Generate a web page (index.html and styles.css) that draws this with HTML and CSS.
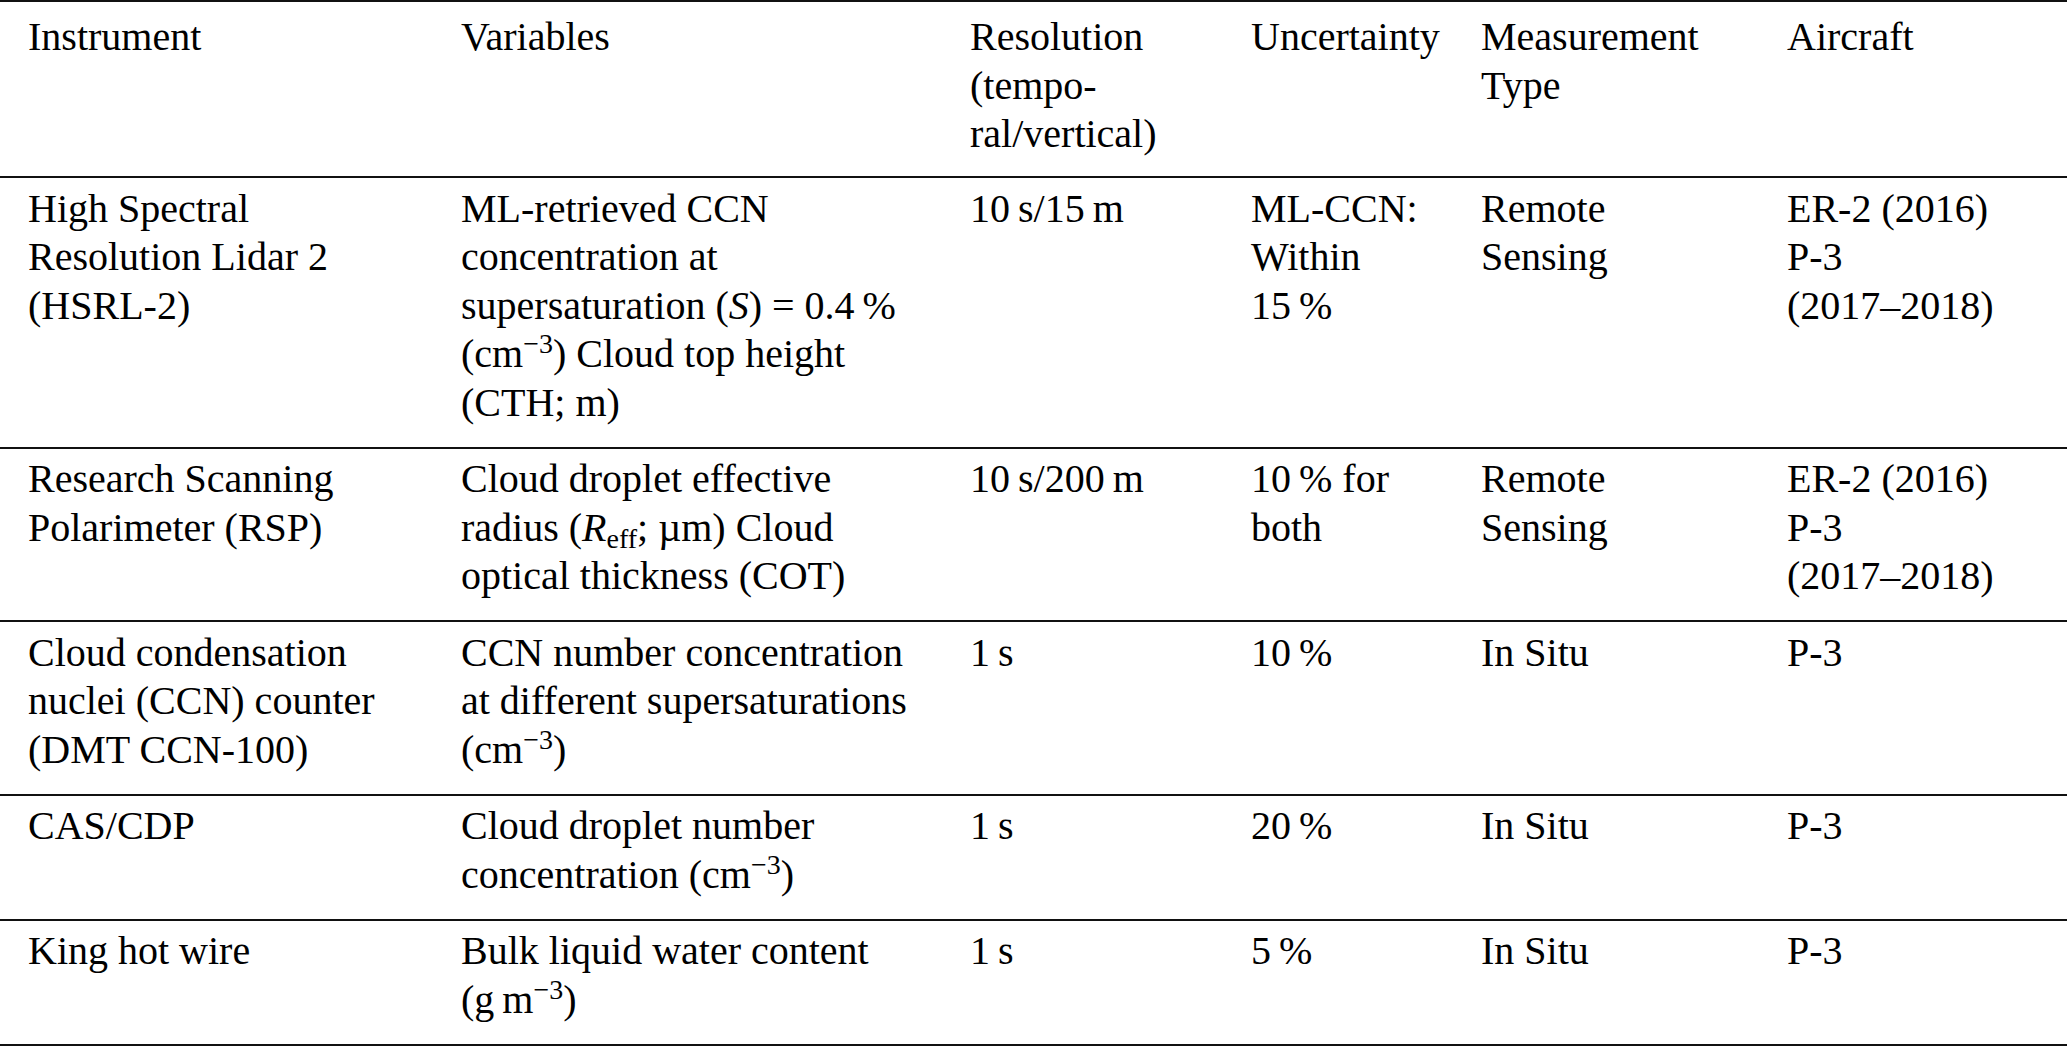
FILE: index.html
```html
<!DOCTYPE html>
<html lang="en">
<head>
<meta charset="utf-8">
<title>Instruments</title>
<link rel="stylesheet" href="styles.css">
</head>
<body>
<div class="table">
  <div class="h">Instrument</div>
  <div class="h">Variables</div>
  <div class="h">Resolution (tempo-<br>ral/vertical)</div>
  <div class="h">Uncertainty</div>
  <div class="h">Measurement Type</div>
  <div class="h">Aircraft</div>

  <div class="c">High Spectral Resolution Lidar 2 (HSRL-2)</div>
  <div class="c">ML-retrieved CCN concentration at supersaturation <span class="nb">(<i>S</i>)&nbsp;=&nbsp;0.4&#8201;%</span> <span class="nb">(cm<span class="sup">&#8722;3</span>)</span> Cloud top height (CTH; m)</div>
  <div class="c"><span class="nb">10&#8201;s/15&#8201;m</span></div>
  <div class="c">ML-CCN: Within <span class="nb">15&#8201;%</span></div>
  <div class="c">Remote Sensing</div>
  <div class="c"><span class="nb">ER-2 (2016)</span> <span class="nb">P-3</span> <span class="nb">(2017–2018)</span></div>

  <div class="c">Research Scanning Polarimeter (RSP)</div>
  <div class="c">Cloud droplet effective radius (<i>R</i><span class="sub">eff</span>; µm) Cloud optical thickness (COT)</div>
  <div class="c"><span class="nb">10&#8201;s/200&#8201;m</span></div>
  <div class="c"><span class="nb">10&#8201;%</span> for both</div>
  <div class="c">Remote Sensing</div>
  <div class="c"><span class="nb">ER-2 (2016)</span> <span class="nb">P-3</span> <span class="nb">(2017–2018)</span></div>

  <div class="c">Cloud condensation nuclei (CCN) counter (DMT CCN-100)</div>
  <div class="c">CCN number concentration at different supersaturations <span class="nb">(cm<span class="sup">&#8722;3</span>)</span></div>
  <div class="c"><span class="nb">1&#8201;s</span></div>
  <div class="c"><span class="nb">10&#8201;%</span></div>
  <div class="c">In Situ</div>
  <div class="c"><span class="nb">P-3</span></div>

  <div class="c">CAS/CDP</div>
  <div class="c">Cloud droplet number concentration <span class="nb">(cm<span class="sup">&#8722;3</span>)</span></div>
  <div class="c"><span class="nb">1&#8201;s</span></div>
  <div class="c"><span class="nb">20&#8201;%</span></div>
  <div class="c">In Situ</div>
  <div class="c"><span class="nb">P-3</span></div>

  <div class="c">King hot wire</div>
  <div class="c">Bulk liquid water content <span class="nb">(g&#8201;m<span class="sup">&#8722;3</span>)</span></div>
  <div class="c"><span class="nb">1&#8201;s</span></div>
  <div class="c"><span class="nb">5&#8201;%</span></div>
  <div class="c">In Situ</div>
  <div class="c"><span class="nb">P-3</span></div>
</div>
</body>
</html>
```

FILE: styles.css
```css
html, body {
  margin: 0;
  padding: 0;
  background: #ffffff;
}

body {
  font-family: "Liberation Serif", "Times New Roman", serif;
  font-size: 40px;
  line-height: 48.5px;
  color: #000000;
}

.table {
  display: grid;
  grid-template-columns: 433px 509px 281px 230px 306px 1fr;
  width: 2067px;
}

.h {
  padding: 11px 28px 17.5px 28px;
  border-top: 2px solid #111111;
  border-bottom: 2px solid #111111;
  font-weight: normal;
}

.c {
  padding: 6.5px 28px 19.5px 28px;
  border-bottom: 2px solid #111111;
}

.nb {
  white-space: nowrap;
}

.sup {
  font-size: 0.7em;
  line-height: 0;
  vertical-align: 0.5em;
}

.sub {
  font-size: 0.7em;
  line-height: 0;
  vertical-align: -0.25em;
}

i {
  font-style: italic;
}
```
